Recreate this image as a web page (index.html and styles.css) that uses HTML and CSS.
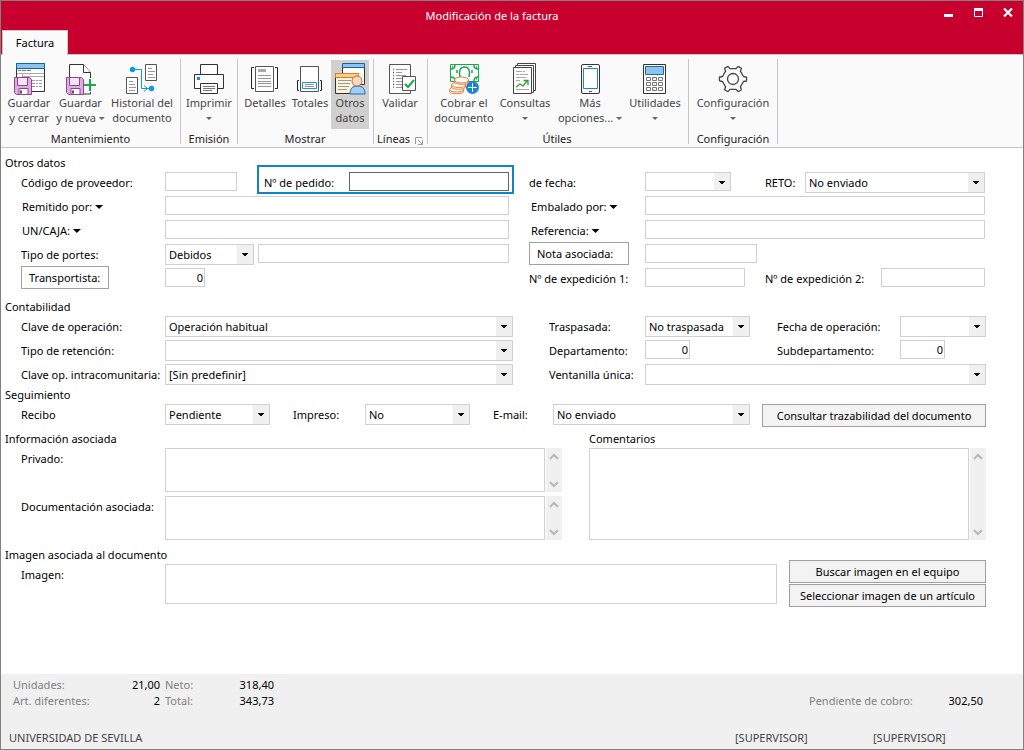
FILE: index.html
```html
<!DOCTYPE html>
<html lang="es">
<head>
<meta charset="utf-8">
<meta name="viewport" content="width=device-width, initial-scale=1">
<title>Modificación de la factura</title>
<link rel="stylesheet" href="styles.css">
</head>
<body>
<svg class="defs" aria-hidden="true">
  <defs>
    <symbol id="floppy" viewBox="0 0 18 18">
      <path d="M.5.5h15l2 2v15h-15l-2-2z" fill="#dcb0dc" stroke="#963f96"/>
      <path d="M3.500.5h10v8h-10z" fill="#f3e6f3" stroke="#963f96"/>
      <path d="M5 11.500h9v6H5z" fill="#fff" stroke="#963f96"/>
      <path d="M7 13.500v3" stroke="#555" stroke-width="2"/>
    </symbol>
  </defs>
</svg>
<div class="window">
  <header class="titlebar">
    <div class="title-row">
      <h1 class="title">Modificación de la factura</h1>
      <div class="window-controls">
        <button type="button" aria-label="Minimizar"><svg width="10" height="10"><path d="M1 6h9v3H1z" fill="#fff"/></svg></button>
        <button type="button" aria-label="Maximizar"><svg width="10" height="10"><path d="M1.500.5h8v8h-8z" fill="none" stroke="#fff"/><path d="M1 0h9v3H1z" fill="#fff"/></svg></button>
        <button type="button" aria-label="Cerrar"><svg width="10" height="10"><path d="M1 .5l8 8M9 .5l-8 8" stroke="#fff" stroke-width="2.200"/></svg></button>
      </div>
    </div>
    <nav class="tabs"><button type="button" class="tab">Factura</button></nav>
  </header>

  <div class="ribbon">
    <section class="group">
      <div class="tools">
        <button type="button" class="tool w50">
          <svg class="icon" viewBox="0 0 32 32"><path d="M3.500.5h28v28h-28z" fill="#fff" stroke="#333"/><path d="M3.500.5h28v5h-28z" fill="#8cc4ee" stroke="#0f66a8"/><path d="M5 7.500h3M9 7.500h4M14 7.500h4" stroke="#777"/><path d="M4 10.500h27M9.500 11v3M10 13.500h21" stroke="#aaa"/><path d="M19 17.500h3m1 0h2m1 0h3M19 20.500h3m1 0h2m1 0h3M19 23.500h3m1 0h2m1 0h3" stroke="#999"/><use href="#floppy" x="1" y="14" width="18" height="18"/></svg>
          <span>Guardar<br>y cerrar</span></button>
        <button type="button" class="tool w53">
          <svg class="icon" viewBox="0 0 32 32"><path d="M4.500 30V1.500h14l7 8V31H14" fill="#fff" stroke="#333"/><path d="M18.500 1.500v8h7" fill="#fff" stroke="#333"/><use href="#floppy" x="1" y="14" width="18" height="18"/><path d="M19 15h13v14H19z" fill="#fafafa"/><path d="M19 22h12M25 16v12" stroke="#16a84c" stroke-width="2"/></svg>
          <span>Guardar<br>y nueva <i class="caret gray"></i></span></button>
        <button type="button" class="tool w70">
          <svg class="icon" viewBox="0 0 32 32"><path d="M19.500 1.500h11v16h-11zM.5 14.500h11v16H.5z" fill="#fff" stroke="#555"/><path d="M22 5.500h4m-4 3h7m-7 3h5m-5 3h7M3 18.500h4m-4 3h6m-6 3h7m-7 3h6" stroke="#999"/><path d="M6 6.500h9.500v19H21M18 22.500l3.500 3-3.500 3M21 25.500h5" fill="none" stroke="#0f9ae0"/><circle cx="6.500" cy="6.500" r="2.700" fill="#0f9ae0"/><circle cx="25.500" cy="25.500" r="2.700" fill="#0f9ae0"/></svg>
          <span>Historial del<br>documento</span></button>
      </div>
      <h2>Mantenimiento</h2>
    </section>
    <section class="group">
      <div class="tools">
        <button type="button" class="tool w50">
          <svg class="icon" viewBox="0 0 32 32"><path d="M7.500 1.500h17v10h-17zM1.500 11.500h29v14h-29z" fill="#fff" stroke="#333"/><path d="M7.500 20.500h17v10h-17z" fill="#fff" stroke="#333"/><path d="M4 14h3v3H4z" fill="#1e88d2"/><path d="M10 23.500h12m-12 2h12m-12 2h9" stroke="#777"/></svg>
          <span>Imprimir<br><i class="caret gray"></i></span></button>
      </div>
      <h2>Emisión</h2>
    </section>
    <section class="group show">
      <div class="tools">
        <button type="button" class="tool w48">
          <svg class="icon" viewBox="0 0 32 32"><path d="M5 4.500H2.500v21H5M26 4.500h2.500v21H26" fill="none" stroke="#222"/><path d="M6.500 3.500h18v25h-18z" fill="#fff" stroke="#555"/><path d="M9 6h8v3H9z" fill="#aaa"/><path d="M9 12.500h13m-13 3h13m-13 3h13m-13 2h13m-13 3h13" stroke="#999"/></svg>
          <span>Detalles</span></button>
        <button type="button" class="tool w42">
          <svg class="icon" viewBox="0 0 32 32"><path d="M5 17.500H3.500v10H5M26 17.500h1.500v10H26" fill="none" stroke="#222"/><path d="M6.500 3.500h18v25h-18z" fill="#fff" stroke="#555"/><path d="M8.500 19.500h14v6h-14z" fill="#fff" stroke="#0f9ae0"/><path d="M11 21.500h9m-9 2h9" stroke="#999"/></svg>
          <span>Totales</span></button>
        <button type="button" class="tool w38 active" aria-pressed="true">
          <svg class="icon" viewBox="0 0 32 32"><path d="M8.500 1.500h22v20h-22z" fill="#fff" stroke="#333"/><path d="M8.500.5h22v4h-22z" fill="#8cc4ee" stroke="#0f66a8"/><path d="M1.500 10.500h23v20h-23z" fill="#fdf3d6" stroke="#333"/><path d="M1.500 10.500h23v4h-23z" fill="#fbd08a" stroke="#e07b28"/><path d="M4 17.500h13m-13 3h12m-12 3h11m-11 3h9" stroke="#999"/><path d="M16 31c0-5 2-8 7.500-8s7.500 3 7.500 8z" fill="#a5cdf0" stroke="#1a6cb0"/><circle cx="23" cy="18" r="5" fill="#fbd9be" stroke="#b0703c"/></svg>
          <span>Otros<br>datos</span></button>
      </div>
      <h2>Mostrar</h2>
    </section>
    <section class="group lines">
      <div class="tools">
        <button type="button" class="tool w52">
          <svg class="icon" viewBox="0 0 32 32"><path d="M5.500 1.500h21v29h-21z" fill="#fff" stroke="#555"/><path d="M9 6.500h1m-1 6h1m-1 6h1m-1 6h1" stroke="#16a84c" stroke-width="1.500"/><path d="M9 9.500h1m-1 6h1m-1 6h1" stroke="#d0102c" stroke-width="1.500"/><path d="M12 6.500h11m-11 3h6m-6 3h10m-10 3h6m-6 3h6m-6 3h6m-6 3h6" stroke="#999"/><path d="M18.500 13.500h13v14h-13z" fill="#fff" stroke="#555"/><path d="M21 21l3 3 6-7" fill="none" stroke="#16a84c" stroke-width="2"/></svg>
          <span>Validar</span></button>
      </div>
      <h2>Líneas <svg width="8" height="8" viewBox="0 0 8 8"><path d="M.5 7V.5H7M3 3l4 4M7.500 3v4.500H3" fill="none" stroke="#999"/></svg></h2>
    </section>
    <section class="group useful">
      <div class="tools">
        <button type="button" class="tool w66">
          <svg class="icon" viewBox="0 0 32 32"><path d="M2.500 1.500h28v17h-28z" fill="#fff" stroke="#16a84c"/><path d="M3 6q4 0 4-4M30 6q-4 0-4-4M3 14q4 0 4 4M30 14q-4 0-4 4M12 14q-2-10 4.500-10T21 14M4 4h1M28 4h1M9 7v3M24 7v3M28 16h1" fill="none" stroke="#16a84c" stroke-width="1.500"/><g fill="#fff" stroke="#e87b35"><path d="M1.500 27v1.500c0 3 14 3 14 0V27"/><ellipse cx="8.500" cy="26.500" rx="7" ry="2.500"/><path d="M3.500 22v2c0 3 14 3 14 0v-2"/><ellipse cx="10.500" cy="22" rx="7" ry="2.500"/><path d="M6.500 17v2c0 3 14 3 14 0v-2"/><ellipse cx="13.500" cy="17" rx="7" ry="3"/></g><circle cx="24.500" cy="24.500" r="6.500" fill="#1b87cb"/><path d="M20 24.500h9M24.500 20v9" stroke="#fff"/></svg>
          <span>Cobrar el<br>documento</span></button>
        <button type="button" class="tool w56">
          <svg class="icon" viewBox="0 0 32 32"><path d="M8.500.5h18v27h-18z" fill="#fff" stroke="#444"/><path d="M6.500 2.500h18v27h-18z" fill="#fff" stroke="#444"/><path d="M4.500 4.500h18v26h-18z" fill="#fff" stroke="#444"/><path d="M7 8.500h6m1 0h2m-9 3h3m1 0h8m-12 3h10m-10 12h13m-13-9h4" stroke="#aaa"/><path d="M7 24l4-3 3 2 4-5M14.500 17.500H19V22" fill="none" stroke="#2ca02c" stroke-width="1.300"/></svg>
          <span>Consultas<br><i class="caret gray"></i></span></button>
        <button type="button" class="tool w74">
          <svg class="icon" viewBox="0 0 32 32"><rect x="7.500" y="1.500" width="18" height="29" rx="1.500" fill="#fff" stroke="#333"/><path d="M9.500 5.500h14v20h-14z" fill="#fff" stroke="#1b87cb"/><path d="M14 3.500h4M15 28.500h3" stroke="#555"/></svg>
          <span>Más<br>opciones... <i class="caret gray"></i></span></button>
        <button type="button" class="tool w56">
          <svg class="icon" viewBox="0 0 32 32"><path d="M4.500 1.500h22v29h-22z" fill="#fff" stroke="#333"/><path d="M6.500 3.500h18v8h-18z" fill="#8cc4ee" stroke="#1a6cb0"/><path d="M7.500 14.500h4v3h-4zm6 0h4v3h-4zm6 0h4v3h-4zM7.500 19.500h4v3h-4zm6 0h4v3h-4zm6 0h4v3h-4zM7.500 24.500h4v3h-4zm6 0h4v3h-4zm6 0h4v3h-4z" fill="#fff" stroke="#777"/></svg>
          <span>Utilidades<br><i class="caret gray"></i></span></button>
      </div>
      <h2>Útiles</h2>
    </section>
    <section class="group">
      <div class="tools">
        <button type="button" class="tool w82">
          <svg class="icon" viewBox="0 0 32 32"><g transform="translate(16 16)" fill="none" stroke="#444" stroke-width="1.300" stroke-linejoin="round"><circle r="5.500"/><path id="g" d="M13.500-2Q13.700 0 13.500 2L10.500 2.500Q9 5.200 7.400 7.800L8.500 10.700"/><use href="#g" transform="rotate(60)"/><use href="#g" transform="rotate(120)"/><use href="#g" transform="rotate(180)"/><use href="#g" transform="rotate(240)"/><use href="#g" transform="rotate(300)"/></g></svg>
          <span>Configuración<br><i class="caret gray"></i></span></button>
      </div>
      <h2>Configuración</h2>
    </section>
  </div>

  <form class="form">
    <section class="section other">
      <h2>Otros datos</h2>
      <div class="row">
        <label for="prov">Código de proveedor:</label>
        <div class="cell">
          <input id="prov" class="f72">
          <div class="highlight"><label for="ped">Nº de pedido:</label><input id="ped" class="focus"></div>
        </div>
        <label for="fecha" class="second">de fecha:</label>
        <div class="cell">
          <select id="fecha" class="f86 short"><option></option></select>
          <label for="reto" class="reto">RETO:</label>
          <select id="reto" class="grow"><option>No enviado</option></select>
        </div>
      </div>
      <div class="row">
        <button type="button" class="link">Remitido por: <i class="caret"></i></button>
        <input aria-label="Remitido por">
        <button type="button" class="link second">Embalado por: <i class="caret"></i></button>
        <input aria-label="Embalado por">
      </div>
      <div class="row">
        <button type="button" class="link">UN/CAJA: <i class="caret"></i></button>
        <input aria-label="UN/CAJA">
        <button type="button" class="link second">Referencia: <i class="caret"></i></button>
        <input aria-label="Referencia">
      </div>
      <div class="row">
        <label for="portes">Tipo de portes:</label>
        <div class="cell tight">
          <select id="portes" class="f89"><option>Debidos</option></select>
          <input class="grow" aria-label="Detalle de portes">
        </div>
        <div class="second"><button type="button" class="btn white f100">Nota asociada:</button></div>
        <div class="cell"><input class="f112" aria-label="Nota asociada"></div>
      </div>
      <div class="row">
        <div><button type="button" class="btn white f88">Transportista:</button></div>
        <div class="cell"><input class="f40 num" value="0" aria-label="Transportista"></div>
        <label for="exp1" class="second">Nº de expedición 1:</label>
        <div class="cell">
          <input id="exp1" class="f100">
          <label for="exp2" class="grow">Nº de expedición 2:</label>
          <input id="exp2" class="f104">
        </div>
      </div>
    </section>

    <section class="section accounts">
      <h2>Contabilidad</h2>
      <div class="row">
        <label for="clave">Clave de operación:</label>
        <select id="clave"><option>Operación habitual</option></select>
        <label for="trasp" class="second">Traspasada:</label>
        <div class="triple">
          <select id="trasp" class="f105"><option>No traspasada</option></select>
          <label for="fop">Fecha de operación:</label>
          <select id="fop"><option></option></select>
        </div>
      </div>
      <div class="row">
        <label for="ret">Tipo de retención:</label>
        <select id="ret"><option></option></select>
        <label for="dep" class="second">Departamento:</label>
        <div class="triple">
          <input id="dep" class="f45 num" value="0">
          <label for="sub">Subdepartamento:</label>
          <input id="sub" class="f45 num" value="0">
        </div>
      </div>
      <div class="row">
        <label for="intra">Clave op. intracomunitaria:</label>
        <select id="intra"><option>[Sin predefinir]</option></select>
        <label for="vent" class="second">Ventanilla única:</label>
        <select id="vent"><option></option></select>
      </div>
    </section>

    <section class="section">
      <h2>Seguimiento</h2>
      <div class="tracking">
        <label for="rec">Recibo</label>
        <select id="rec"><option>Pendiente</option></select>
        <label for="imp" class="inner">Impreso:</label>
        <select id="imp"><option>No</option></select>
        <label for="mail" class="inner">E-mail:</label>
        <select id="mail"><option>No enviado</option></select>
        <button type="button" class="btn trace">Consultar trazabilidad del documento</button>
      </div>
    </section>

    <div class="notes">
      <section class="section">
        <h2>Información asociada</h2>
        <div class="note">
          <label for="priv">Privado:</label>
          <textarea id="priv"></textarea>
          <div class="scroll"><button type="button" aria-label="Subir"><svg width="10" height="8"><path d="M1 6l4-4 4 4" /></svg></button><button type="button" aria-label="Bajar"><svg width="10" height="8"><path d="M1 2l4 4 4-4" /></svg></button></div>
        </div>
        <div class="note">
          <label for="doc">Documentación asociada:</label>
          <textarea id="doc"></textarea>
          <div class="scroll"><button type="button" aria-label="Subir"><svg width="10" height="8"><path d="M1 6l4-4 4 4" /></svg></button><button type="button" aria-label="Bajar"><svg width="10" height="8"><path d="M1 2l4 4 4-4" /></svg></button></div>
        </div>
      </section>
      <section class="comments">
        <h2><label for="com">Comentarios</label></h2>
        <div class="comment-box">
          <textarea id="com"></textarea>
          <div class="scroll"><button type="button" aria-label="Subir"><svg width="10" height="8"><path d="M1 6l4-4 4 4" /></svg></button><button type="button" aria-label="Bajar"><svg width="10" height="8"><path d="M1 2l4 4 4-4" /></svg></button></div>
        </div>
      </section>
    </div>

    <div class="image-area">
      <section class="section">
        <h2>Imagen asociada al documento</h2>
        <div class="image-row"><label for="img">Imagen:</label><textarea id="img"></textarea></div>
      </section>
      <div class="image-buttons">
        <button type="button" class="btn">Buscar imagen en el equipo</button>
        <button type="button" class="btn">Seleccionar imagen de un artículo</button>
      </div>
    </div>
  </form>

  <footer class="footer">
    <div class="totals">
      <dl class="totals-left">
        <dt>Unidades:</dt><dd>21,00</dd><dt class="next">Neto:</dt><dd>318,40</dd>
        <dt>Art. diferentes:</dt><dd>2</dd><dt class="next">Total:</dt><dd>343,73</dd>
      </dl>
      <dl class="pending"><dt>Pendiente de cobro:</dt><dd>302,50</dd></dl>
    </div>
    <div class="status"><span class="company">UNIVERSIDAD DE SEVILLA</span><span>[SUPERVISOR]</span><span>[SUPERVISOR]</span></div>
  </footer>
</div>
</body>
</html>
```
FILE: styles.css
```css
* { box-sizing: border-box; }

body {
  margin: 0;
  font: 11px/16px "Noto Sans", "Open Sans", sans-serif;
  color: #000;
}

h1, h2, dl, dd { margin: 0; font-size: 11px; font-weight: 400; }
button, input, select, textarea { font: inherit; color: inherit; margin: 0; border-radius: 0; }
button { background: none; border: 0; padding: 0; }
.defs { position: absolute; width: 0; height: 0; }

.window {
  min-height: 100vh;
  display: flex;
  flex-direction: column;
  border: 1px solid #808080;
  background: #fff;
}

/* Title bar */
.titlebar { background: #c8002d; color: #fff; }
.title-row { display: flex; height: 29px; align-items: center; }
.title { flex: 1; padding-left: 50px; text-align: center; }
.window-controls { display: flex; align-self: flex-start; }
.window-controls button { width: 30px; height: 24px; }
.window-controls svg { display: block; margin: 0 auto; }
.tabs { display: flex; padding-left: 1px; }
.tab {
  position: relative;
  height: 25px;
  width: 66px;
  margin-bottom: -1px;
  border: 1px solid #c6c6c6;
  border-bottom: 0;
  background: #fafafa;
  color: #000;
}

/* Ribbon */
.ribbon {
  display: flex;
  padding: 4px 0 3px;
  background: #fafafa;
  border-top: 1px solid #c6c6c6;
  border-bottom: 1px solid #c6c6c6;
}
.group {
  display: flex;
  flex-direction: column;
  padding: 0 3px;
  height: 85px;
  border-right: 1px solid #c6c6c6;
}
.group.show { padding-right: 4px; }
.group.lines { padding: 0 1px 0 0; }
.group.useful { padding-right: 5px; }
.tools { display: flex; padding-top: 1px; }
.tool {
  display: flex;
  flex-direction: column;
  align-items: center;
  height: 69px;
  padding-top: 3px;
  line-height: 15px;
  color: #444;
  white-space: nowrap;
}
.tool.active { background: #d0d0d0; }
.icon { width: 32px; height: 32px; flex: none; }
.group h2 { text-align: center; color: #222; white-space: nowrap; padding-top: 2px; }
.group.lines h2 svg { margin-left: 2px; vertical-align: -2px; }
.w38 { width: 38px; } .w42 { width: 42px; } .w48 { width: 48px; }
.w50 { width: 50px; } .w52 { width: 52px; } .w53 { width: 53px; }
.w56 { width: 56px; } .w66 { width: 66px; } .w70 { width: 70px; }
.w74 { width: 74px; } .w82 { width: 82px; }

.caret {
  display: inline-block;
  width: 8px;
  height: 4px;
  margin-bottom: 2px;
  background: #000;
  clip-path: polygon(0 0, 100% 0, 50% 100%);
}
.caret.gray { width: 6px; height: 3px; background: #666; }

/* Form */
.form { padding: 6px 37px 12px 20px; }
.section h2, .comments h2 { height: 16px; line-height: 18px; white-space: nowrap; }
.section h2 { margin-left: -16px; }
.other { padding-right: 1px; margin-bottom: 8px; }

.row { display: grid; height: 24px; }
.other .row { grid-template-columns: 144px minmax(0, 344fr) 136px minmax(0, 340fr); }
.accounts .row { grid-template-columns: 144px minmax(0, 348fr) 132px minmax(0, 341fr); }
.other .second { padding-left: 20px; }
.accounts .second { padding-left: 36px; }
.form label, .link { line-height: 26px; height: 24px; white-space: nowrap; text-align: left; }
.link { padding-left: 1px; }
.other .link.second { padding-left: 22px; }
.cell { display: flex; gap: 20px; }
.cell.tight { gap: 4px; }
.grow { flex: 1; min-width: 0; }

.form input, .form select, .form textarea {
  border: 1px solid #d0d0d0;
  background: #fff;
  margin-top: 2px;
  width: 100%;
  outline: 0;
}
.form input { height: 19px; padding: 0 4px; }
.form input.num { text-align: right; padding: 0 1px; }
.form select {
  appearance: none;
  height: 21px;
  padding: 0 18px 0 3px;
  background:
    linear-gradient(#000, #000) right 5px top 8px / 6px 1px,
    linear-gradient(#000, #000) right 6px top 9px / 4px 1px,
    linear-gradient(#000, #000) right 7px top 10px / 2px 1px,
    linear-gradient(#f0f0f0, #f0f0f0) right top / 16px 100%,
    #fff;
  background-repeat: no-repeat;
}
.form select.short { height: 19px; }
.form textarea { display: block; resize: none; padding: 2px 4px; }
.form input.focus { border-color: #646464; }

.highlight { position: relative; display: flex; flex: 1; margin-left: 7px; }
.highlight label { width: 85px; flex: none; }
.highlight::after {
  content: "";
  position: absolute;
  inset: -5px -5px 0 -7px;
  border: 2px solid #0f84c9;
  pointer-events: none;
}
.reto { width: 20px; margin-left: 14px; }
.form .f40 { width: 40px; } .form .f45 { width: 45px; } .form .f72 { width: 72px; }
.form .f86 { width: 86px; } .f88 { width: 88px; } .form .f89 { width: 89px; }
.form .f100 { width: 100px; } .form .f104 { width: 104px; }
.form .f105 { width: 105px; } .form .f112 { width: 112px; }
.cell > .grow, .highlight input { width: 0; flex: 1; }
.cell > .grow + .f104 { margin-left: -20px; }

.btn {
  height: 23px;
  border: 1px solid #a0a0a0;
  background: #f3f3f3;
  color: #000;
  white-space: nowrap;
}
.btn.white { background: #fff; padding: 0 7px; text-align: left; }

.triple { display: grid; grid-template-columns: 132px minmax(0, 1fr) 86px; }

.tracking {
  display: grid;
  grid-template-columns: 144px 105px 95px 105px 83px minmax(0, 1fr) 236px;
  height: 24px;
  margin-bottom: 4px;
}
.inner { padding-left: 23px; }
.trace { margin: 2px 0 0 12px; }

/* Notes and comments */
.notes { display: grid; grid-template-columns: 541fr 397fr; gap: 27px; }
.image-row { display: grid; grid-template-columns: 144px minmax(0, 1fr); }
.note { display: grid; grid-template-columns: 144px minmax(0, 1fr) 16px; height: 48px; }
.note textarea { height: 44px; width: calc(100% - 1px); }
.comment-box { display: flex; }
.comment-box textarea { height: 92px; margin-right: 1px; }
.form .comments label { line-height: 18px; }
.scroll {
  display: flex;
  flex-direction: column;
  justify-content: space-between;
  width: 16px;
  flex: none;
  margin: 2px 0;
  background: #f0f0f0;
}
.comment-box .scroll { margin-bottom: 0; }
.scroll button { height: 17px; padding: 0 3px; }
.scroll svg { display: block; }
.scroll path { fill: none; stroke: #b8b8b8; stroke-width: 2; }

.image-area {
  display: grid;
  grid-template-columns: minmax(0, 1fr) 197px;
  gap: 12px;
  align-items: end;
  margin-top: 4px;
}
.image-row { height: 45px; }
.image-row textarea { height: 40px; }
.image-buttons { display: grid; gap: 1px; }

/* Footer */
.footer { margin-top: auto; background: #f0f0f0; padding: 3px 40px 3px 12px; }
.totals { display: flex; justify-content: space-between; align-items: flex-end; color: #808080; }
.totals-left { display: grid; grid-template-columns: 90px 57px 60px 54px; }
.totals-left .next { padding-left: 5px; }
.totals dd { text-align: right; color: #000; }
.pending { display: grid; grid-template-columns: 116px 58px; }
.status { display: flex; padding-top: 21px; color: #444; }
.status span { width: 138px; white-space: nowrap; }
.status .company { flex: 1; margin-left: -4px; }
.status span:last-child { width: 110px; }
```
